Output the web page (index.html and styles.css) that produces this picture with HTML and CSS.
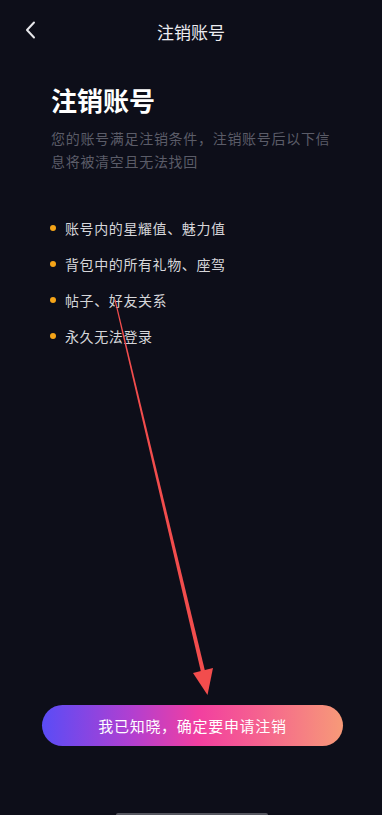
FILE: index.html
```html
<!DOCTYPE html>
<html lang="zh-CN">
<head>
  <meta charset="UTF-8">
  <meta name="viewport" content="width=device-width, initial-scale=1.0">
  <title>注销账号</title>
  <link rel="stylesheet" href="styles.css">
</head>
<body>

  <div class="page">
    <!-- top bar -->
    <div class="nav-bar">
      <svg class="back-icon" width="12" height="18" viewBox="0 0 12 18">
        <path d="M9 1.5 L2 9 L9 16.5" fill="none" stroke="#e6e6ea" stroke-width="2" stroke-linecap="round" stroke-linejoin="round"/>
      </svg>
      <div class="nav-title">注销账号</div>
    </div>

    <div class="content">
      <h1 class="title">注销账号</h1>
      <p class="desc">您的账号满足注销条件，注销账号后以下信息将被清空且无法找回</p>

      <ul class="lose-list">
        <li>账号内的星耀值、魅力值</li>
        <li>背包中的所有礼物、座驾</li>
        <li>帖子、好友关系</li>
        <li>永久无法登录</li>
      </ul>
    </div>

    <div class="footer">
      <button class="confirm-button">我已知晓，确定要申请注销</button>
    </div>

    <div class="home-bar"></div>

    <!-- red annotation arrow drawn over the page -->
    <svg class="mark-arrow" width="382" height="815" viewBox="0 0 382 815">
      <polygon points="114.5,300 115.6,299.8 205,671 201,672" fill="#f24d4d"/>
      <polygon points="193,673 213,668 207.5,695" fill="#f24d4d"/>
    </svg>
  </div>

</body>
</html>
```

FILE: styles.css
```css
* {
  box-sizing: border-box;
}
html, body {
  margin: 0;
  padding: 0;
}
body {
  font-family: "Noto Sans CJK SC", "Noto Sans", sans-serif;
  background-color: #0d0e19;
  color: #ffffff;
}
.page {
  position: relative;
  width: 382px;
  height: 815px;
  display: flex;
  flex-direction: column;
  overflow: hidden;
}
.nav-bar {
  position: relative;
  height: 62px;
  display: flex;
  align-items: center;
  justify-content: center;
}
.back-icon {
  position: absolute;
  left: 25px;
  top: 21px;
}
.nav-title {
  font-size: 17px;
  color: #ececf0;
}
.content {
  padding: 0 40px 0 51px;
  flex: 1;
}
.title {
  font-size: 26px;
  font-weight: bold;
  margin: 20px 0 0 0;
  line-height: 36px;
  color: #ffffff;
}
.desc {
  font-size: 14px;
  line-height: 23px;
  color: #5b5c68;
  margin: 9px 0 0 0;
  letter-spacing: 0.7px;
}
.lose-list {
  list-style: none;
  margin: 45px 0 0 0;
  padding: 0;
}
.lose-list li {
  position: relative;
  font-size: 14px;
  line-height: 20px;
  color: #d6d6da;
  padding-left: 14px;
  margin-bottom: 16px;
  letter-spacing: 0.6px;
}
.lose-list li::before {
  content: "";
  position: absolute;
  left: -1px;
  top: 7px;
  width: 6px;
  height: 6px;
  border-radius: 50%;
  background-color: #f5a418;
}
.footer {
  padding: 0 39px 0 42px;
  margin-bottom: 69px;
}
.confirm-button {
  width: 100%;
  height: 41px;
  border: none;
  border-radius: 21px;
  background: linear-gradient(90deg, #5a4cf6 0%, #b23fd0 30%, #f23fa0 52%, #f5628f 72%, #f79a78 100%);
  color: #ffffff;
  font-family: inherit;
  font-size: 15px;
  letter-spacing: 0.7px;
  cursor: pointer;
}
.home-bar {
  position: absolute;
  left: 116px;
  bottom: 0;
  width: 152px;
  height: 2px;
  border-radius: 2px 2px 0 0;
  background-color: #55565f;
}
.mark-arrow {
  position: absolute;
  left: 0;
  top: 0;
  pointer-events: none;
}
```
